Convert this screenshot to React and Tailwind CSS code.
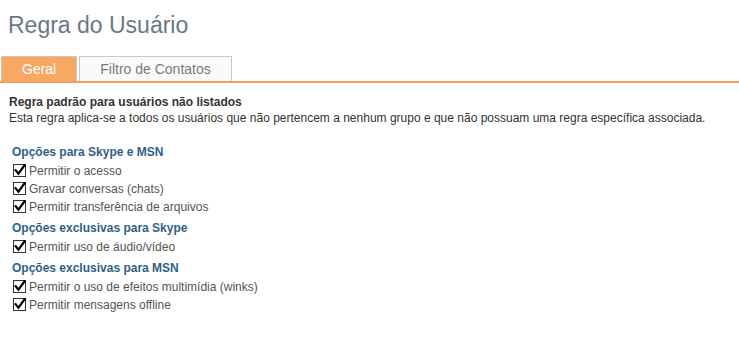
import React from "react";

function Check() {
  return (
    <svg width="14" height="14" viewBox="0 0 14 14" className="shrink-0">
      <rect x="0.5" y="0.5" width="12" height="12" fill="#fff" stroke="#333" strokeWidth="1" />
      <path d="M2.6 6.2 L5.4 9.6 L11.6 1.2" fill="none" stroke="#000" strokeWidth="2.2" strokeLinecap="square" strokeLinejoin="miter" />
    </svg>
  );
}

function Row({ label }) {
  return (
    <div className="flex h-[18px] items-center gap-[2px] text-[12px] text-[#555]">
      <Check />
      <span>{label}</span>
    </div>
  );
}

function Section({ title, items, first }) {
  return (
    <div className={first ? "" : "mt-[2px]"}>
      <div className="flex h-[20px] items-center pl-[12px] text-[12px] font-bold text-[#2f5f8a]">{title}</div>
      <div className="pl-[13px]">
        {items.map((it) => (
          <Row key={it} label={it} />
        ))}
      </div>
    </div>
  );
}

export default function App() {
  return (
    <div
      className="w-[739px] h-[350px] bg-white overflow-hidden"
      style={{ fontFamily: '"Liberation Sans", Arial, sans-serif' }}
    >
      <div className="pl-[8px] pt-[12px] h-[56px] text-[23px] leading-[26px] text-[#6b7786]">Regra do Usuário</div>
      <div className="flex items-end gap-[2px] pl-[1px] h-[25px]">
        <div className="h-[25px] flex items-center px-[20px] border border-b-0 border-[#c8c8c8] bg-[#f8a862] text-[14px] text-white">
          Geral
        </div>
        <div className="h-[25px] flex items-center px-[20px] border border-b-0 border-[#c8c8c8] bg-[#fafafa] text-[14px] text-[#7a7a7a]">
          Filtro de Contatos
        </div>
      </div>
      <div className="h-[2px] bg-[#f4a05a]" />
      <div className="pl-[9px] pt-[11px] text-[12px] leading-[16px] text-[#333]">
        <div className="font-bold">Regra padrão para usuários não listados</div>
        <div>Esta regra aplica-se a todos os usuários que não pertencem a nenhum grupo e que não possuam uma regra específica associada.</div>
      </div>
      <div className="pt-[16px]">
        <Section
          first
          title="Opções para Skype e MSN"
          items={["Permitir o acesso", "Gravar conversas (chats)", "Permitir transferência de arquivos"]}
        />
        <Section title="Opções exclusivas para Skype" items={["Permitir uso de áudio/vídeo"]} />
        <Section
          title="Opções exclusivas para MSN"
          items={["Permitir o uso de efeitos multimídia (winks)", "Permitir mensagens offline"]}
        />
      </div>
    </div>
  );
}
